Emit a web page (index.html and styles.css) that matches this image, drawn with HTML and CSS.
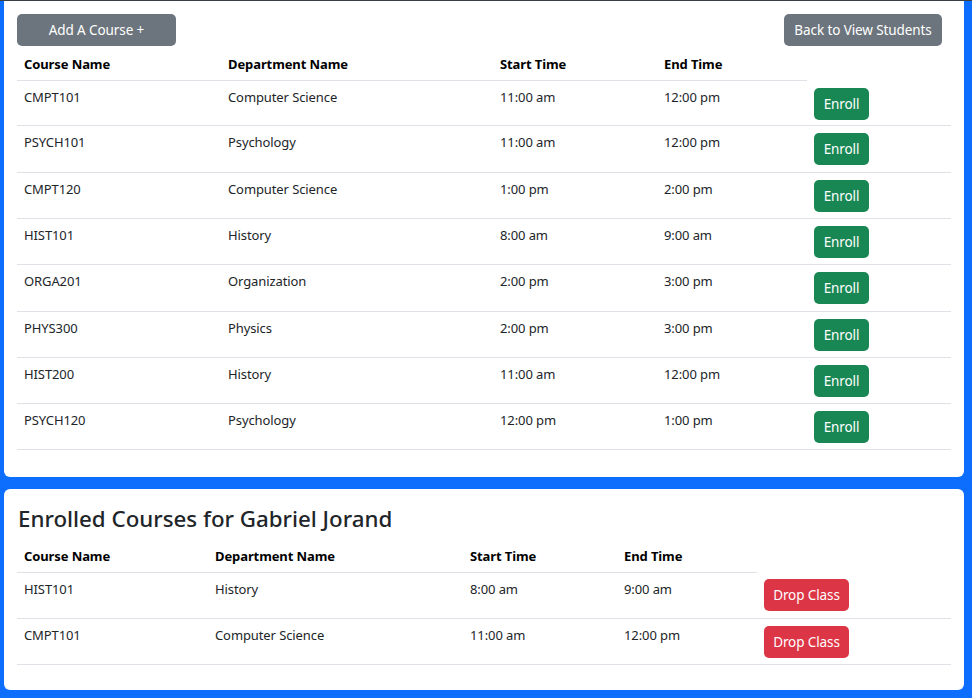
FILE: index.html
```html
<!DOCTYPE html>
<html lang="en">
<head>
<meta charset="utf-8">
<title>Courses</title>
<link rel="stylesheet" href="styles.css">
</head>
<body>
<div class="page">
  <section class="card card-courses">
    <div class="toolbar">
      <button class="btn btn-gray btn-add">Add A Course +</button>
      <button class="btn btn-gray btn-back">Back to View Students</button>
    </div>
    <table class="tbl tbl-courses">
      <colgroup>
        <col class="c1"><col class="c2"><col class="c3"><col class="c4"><col class="c5">
      </colgroup>
      <thead>
        <tr><th>Course Name</th><th>Department Name</th><th>Start Time</th><th>End Time</th></tr>
      </thead>
      <tbody>
        <tr><td>CMPT101</td><td>Computer Science</td><td>11:00 am</td><td>12:00 pm</td><td><button class="btn btn-green">Enroll</button></td></tr>
        <tr><td>PSYCH101</td><td>Psychology</td><td>11:00 am</td><td>12:00 pm</td><td><button class="btn btn-green">Enroll</button></td></tr>
        <tr><td>CMPT120</td><td>Computer Science</td><td>1:00 pm</td><td>2:00 pm</td><td><button class="btn btn-green">Enroll</button></td></tr>
        <tr><td>HIST101</td><td>History</td><td>8:00 am</td><td>9:00 am</td><td><button class="btn btn-green">Enroll</button></td></tr>
        <tr><td>ORGA201</td><td>Organization</td><td>2:00 pm</td><td>3:00 pm</td><td><button class="btn btn-green">Enroll</button></td></tr>
        <tr><td>PHYS300</td><td>Physics</td><td>2:00 pm</td><td>3:00 pm</td><td><button class="btn btn-green">Enroll</button></td></tr>
        <tr><td>HIST200</td><td>History</td><td>11:00 am</td><td>12:00 pm</td><td><button class="btn btn-green">Enroll</button></td></tr>
        <tr><td>PSYCH120</td><td>Psychology</td><td>12:00 pm</td><td>1:00 pm</td><td><button class="btn btn-green">Enroll</button></td></tr>
      </tbody>
    </table>
  </section>
  <section class="card card-enrolled">
    <h2 class="title">Enrolled Courses for Gabriel Jorand</h2>
    <table class="tbl tbl-enrolled">
      <colgroup>
        <col class="c1"><col class="c2"><col class="c3"><col class="c4"><col class="c5">
      </colgroup>
      <thead>
        <tr><th>Course Name</th><th>Department Name</th><th>Start Time</th><th>End Time</th></tr>
      </thead>
      <tbody>
        <tr><td>HIST101</td><td>History</td><td>8:00 am</td><td>9:00 am</td><td><button class="btn btn-red">Drop Class</button></td></tr>
        <tr><td>CMPT101</td><td>Computer Science</td><td>11:00 am</td><td>12:00 pm</td><td><button class="btn btn-red">Drop Class</button></td></tr>
      </tbody>
    </table>
  </section>
</div>
</body>
</html>
```
FILE: styles.css
```css
* { box-sizing: border-box; }
html, body { margin: 0; padding: 0; }
body {
  background: #0d6efd;
  font-family: "Noto Sans", "Open Sans", sans-serif;
  font-size: 13px;
  letter-spacing: -0.1px;
  color: #212529;
  border-top: 1px solid #3a3f46;
}
.page {
  padding: 0 8px 8px 4px;
  display: flex;
  flex-direction: column;
  gap: 12px;
}
.card {
  background: #fff;
  border-radius: 6px;
  padding: 13px 13px 11px 13px;
}
.card-courses {
  border-top-left-radius: 0;
  border-top-right-radius: 0;
  padding-top: 13px;
}
.card-enrolled {
  padding-top: 16px;
  padding-bottom: 9px;
}
.toolbar {
  display: flex;
  justify-content: space-between;
  margin-bottom: 2px;
}
.btn {
  font-family: inherit;
  font-size: 13.5px;
  letter-spacing: -0.1px;
  border: none;
  border-radius: 5px;
  color: #fff;
  height: 32px;
  line-height: 32px;
  padding: 0 12px;
  cursor: pointer;
  text-align: center;
}
.btn-gray { background: #6c757d; }
.btn-add { width: 159px; }
.btn-back { width: 158px; margin-right: 9px; padding: 0 6px; }
.btn-green { background: #198754; width: 55px; padding: 0; }
.btn-red { background: #dc3545; width: 85px; padding: 0; }
.title {
  margin: 0 0 7px 1px;
  font-size: 22.3px;
  letter-spacing: 0;
  font-weight: 500;
  line-height: 28px;
  color: #212529;
}
.tbl {
  width: 934px;
  border-collapse: collapse;
  table-layout: fixed;
  margin-bottom: 16px;
}
.tbl th, .tbl td {
  text-align: left;
  vertical-align: top;
  padding: 7px 7px 6px 7px;
  line-height: 18px;
  border-bottom: 1px solid #dee2e6;
}
.tbl th {
  font-weight: 700;
  color: #000;
  padding-bottom: 7px;
}
.tbl td { color: #212529; }
.tbl-courses tbody tr:first-child td:last-child { padding-bottom: 5px; }
.tbl-courses tbody tr:nth-child(2) td:last-child,
.tbl-courses tbody tr:nth-child(5) td:last-child { padding-bottom: 7px; }
.tbl-enrolled tbody tr:first-child td:last-child { padding-bottom: 7px; }
.tbl-courses .c1 { width: 204px; }
.tbl-courses .c2 { width: 272px; }
.tbl-courses .c3 { width: 164px; }
.tbl-courses .c4 { width: 150px; }
.tbl-courses .c5 { width: 144px; }
.tbl-enrolled .c1 { width: 191px; }
.tbl-enrolled .c2 { width: 255px; }
.tbl-enrolled .c3 { width: 154px; }
.tbl-enrolled .c4 { width: 140px; }
.tbl-enrolled .c5 { width: 194px; }
```
